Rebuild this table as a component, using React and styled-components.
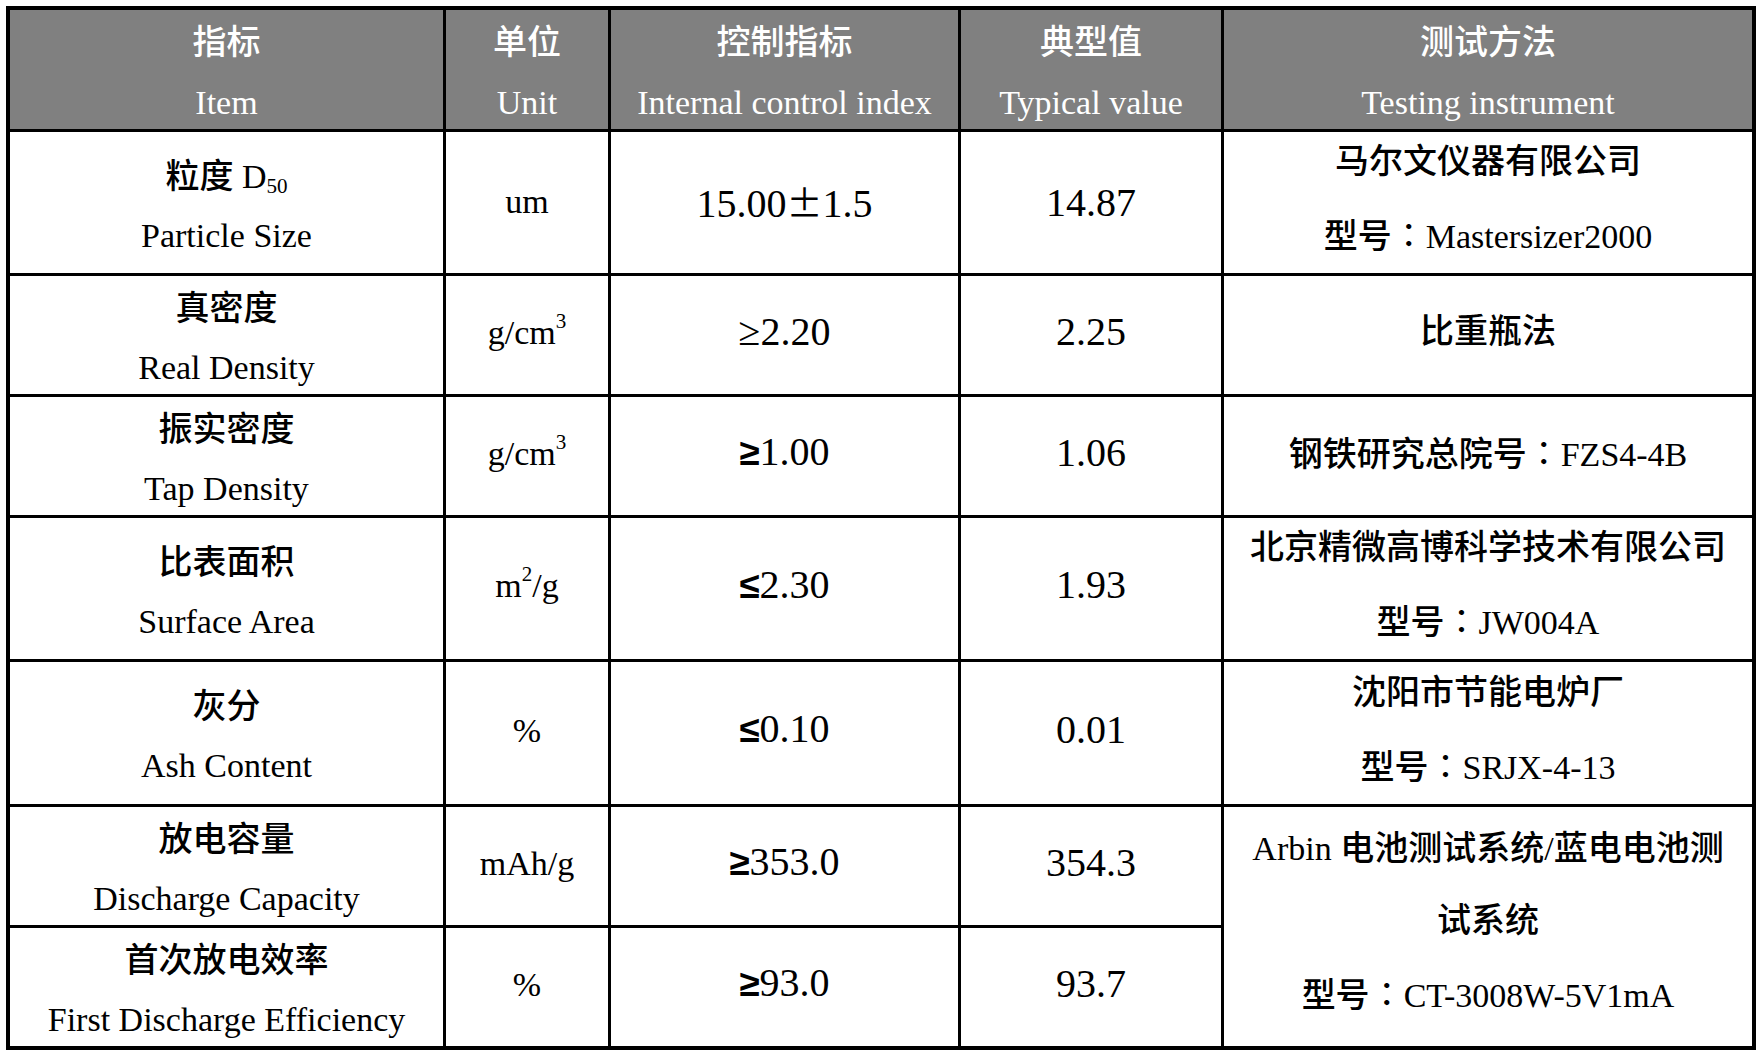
import React from "react";
import styled, { createGlobalStyle } from "styled-components";

const GlobalStyle = createGlobalStyle`
  html, body {
    margin: 0;
    padding: 0;
    background: #ffffff;
  }
`;

const Page = styled.div`
  padding: 6px;
  font-family: "Liberation Serif", "Noto Sans CJK SC", serif;
  font-weight: 500;
`;

const Grid = styled.div`
  display: grid;
  grid-template-columns: 433px 162px 347px 260px 528px;
  grid-template-rows: 119px 141px 118px 118px 141px 142px 118px 118px;
  gap: 3px;
  padding: 4px;
  width: max-content;
  background: #000000;
`;

const Cell = styled.div`
  display: flex;
  flex-direction: column;
  align-items: center;
  justify-content: center;
  text-align: center;
  white-space: nowrap;
  background: ${({ $head }) => ($head ? "#808080" : "#ffffff")};
  color: ${({ $head }) => ($head ? "#ffffff" : "#000000")};
  font-size: ${({ $big }) => ($big ? 40 : 34)}px;
  line-height: ${({ $lh }) => $lh || 59}px;
  padding-top: ${({ $pt }) => $pt || 0}px;
  padding-bottom: ${({ $pb }) => $pb || 0}px;
  grid-row: ${({ $span }) => ($span ? `span ${$span}` : "auto")};
`;

const Line = styled.div``;

const Sup = styled.sup`
  font-size: 0.62em;
  line-height: 0;
  vertical-align: 0.78em;
`;

const Sub = styled.sub`
  font-size: 0.62em;
  line-height: 0;
  vertical-align: -0.22em;
`;

// heavy sans comparison sign, as in the source document
const Sign = styled.span`
  font-family: "Liberation Sans", sans-serif;
  font-weight: 700;
  font-size: 0.92em;
`;

const PlusMinus = styled.span`
  font-family: "Noto Sans CJK SC", sans-serif;
  font-weight: 400;
  font-size: 0.9em;
`;

const Colon = styled.span`
  font-family: "Noto Sans CJK TC", sans-serif;
  font-weight: 400;
`;

const headers = [
  ["指标", "Item"],
  ["单位", "Unit"],
  ["控制指标", "Internal control index"],
  ["典型值", "Typical value"],
  ["测试方法", "Testing instrument"],
];

const cm3 = (
  <>
    g/cm<Sup>3</Sup>
  </>
);

const model = (name) => (
  <>
    型号<Colon>：</Colon>
    {name}
  </>
);

const rows = [
  {
    item: (
      <>
        粒度 D<Sub>50</Sub>
      </>
    ),
    en: "Particle Size",
    unit: "um",
    control: (
      <>
        15.00<PlusMinus>±</PlusMinus>1.5
      </>
    ),
    typical: "14.87",
    test: ["马尔文仪器有限公司", model("Mastersizer2000")],
    lift: 0,
  },
  {
    item: "真密度",
    en: "Real Density",
    unit: cm3,
    control: "≥2.20",
    typical: "2.25",
    test: ["比重瓶法"],
  },
  {
    item: "振实密度",
    en: "Tap Density",
    unit: cm3,
    control: (
      <>
        <Sign>≥</Sign>1.00
      </>
    ),
    typical: "1.06",
    test: [
      <>
        钢铁研究总院号<Colon>：</Colon>FZS4-4B
      </>,
    ],
  },
  {
    item: "比表面积",
    en: "Surface Area",
    unit: (
      <>
        m<Sup>2</Sup>/g
      </>
    ),
    control: (
      <>
        <Sign>≤</Sign>2.30
      </>
    ),
    typical: "1.93",
    test: ["北京精微高博科学技术有限公司", model("JW004A")],
  },
  {
    item: "灰分",
    en: "Ash Content",
    unit: "%",
    control: (
      <>
        <Sign>≤</Sign>0.10
      </>
    ),
    typical: "0.01",
    test: ["沈阳市节能电炉厂", model("SRJX-4-13")],
  },
  {
    item: "放电容量",
    en: "Discharge Capacity",
    unit: "mAh/g",
    control: (
      <>
        <Sign>≥</Sign>353.0
      </>
    ),
    typical: "354.3",
    test: ["Arbin 电池测试系统/蓝电电池测", "试系统", model("CT-3008W-5V1mA")],
    span: 2,
  },
  {
    item: "首次放电效率",
    en: "First Discharge Efficiency",
    unit: "%",
    control: (
      <>
        <Sign>≥</Sign>93.0
      </>
    ),
    typical: "93.7",
  },
];

const App = () => {
  return (
    <Page>
      <GlobalStyle />
      <Grid>
        {headers.map(([zh, en]) => (
          <Cell $head key={en} $lh={60} $pt={6}>
            <Line>{zh}</Line>
            <Line>{en}</Line>
          </Cell>
        ))}
        {rows.map((row) => {
          const lift = row.lift ?? 8;
          return (
            <React.Fragment key={row.en}>
              <Cell $pt={6}>
                <Line>{row.item}</Line>
                <Line>{row.en}</Line>
              </Cell>
              <Cell $pb={lift ? 6 : 2}>
                <Line>{row.unit}</Line>
              </Cell>
              <Cell $big $pb={lift}>
                <Line>{row.control}</Line>
              </Cell>
              <Cell $big $pb={lift}>
                <Line>{row.typical}</Line>
              </Cell>
              {row.test && (
                <Cell $lh={72} $pb={row.span ? 8 : 6} $span={row.span}>
                  {row.test.map((t, i) => (
                    <Line key={i}>{t}</Line>
                  ))}
                </Cell>
              )}
            </React.Fragment>
          );
        })}
      </Grid>
    </Page>
  );
};

export default App;
